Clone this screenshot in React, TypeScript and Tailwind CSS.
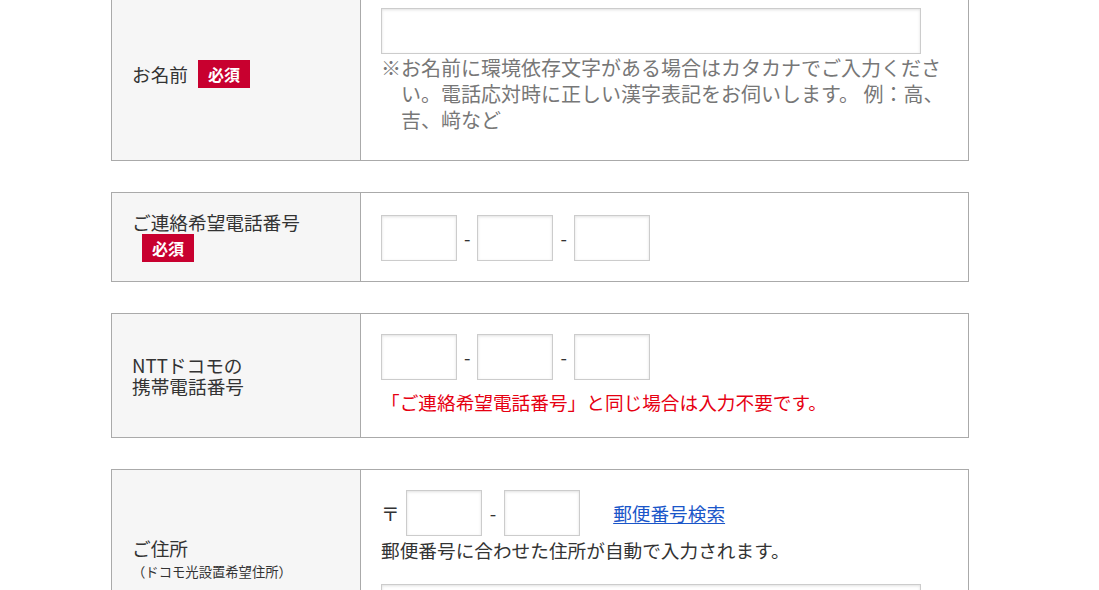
import React from 'react';

const font = { fontFamily: '"Noto Sans CJK JP", "Noto Sans", sans-serif' };

function Badge() {
    return (
        <span className="inline-flex items-center justify-center h-[28px] px-[10px] ml-[10px] bg-[#c8002f] text-white text-[16px] font-bold leading-none align-middle">
            必須
        </span>
    );
}

function TextInput({ className }: { className: string }) {
    return (
        <input
            type="text"
            className={`h-[46px] bg-white border border-[#cccccc] shadow-[inset_0_1px_3px_rgba(0,0,0,0.12)] outline-none ${className}`}
        />
    );
}

function Dash() {
    return <span className="text-[18.67px] leading-none text-[#333]">-</span>;
}

function TelInputs() {
    return (
        <div className="flex items-center gap-[7px]">
            <TextInput className="w-[76px]" />
            <Dash />
            <TextInput className="w-[76px]" />
            <Dash />
            <TextInput className="w-[76px]" />
        </div>
    );
}

function Row({ label, children }: { label: React.ReactNode; children: React.ReactNode }) {
    return (
        <div className="flex w-[858px] border border-[#aaaaaa]">
            <div className="w-[249px] shrink-0 bg-[#f6f6f6] border-r border-[#aaaaaa] px-5 flex items-center text-[18.67px] leading-[1.1] text-[#333]">
                <div>{label}</div>
            </div>
            <div className="flex-1 px-5 pt-5 pb-5">{children}</div>
        </div>
    );
}

export default function App() {
    return (
        <div className="bg-white min-h-screen h-[590px] overflow-hidden" style={font}>
            <div className="ml-[111px] flex flex-col gap-[31px] -mt-[13px]">
                {/* お名前 */}
                <Row
                    label={
                        <span className="inline-flex items-center">
                            お名前<Badge />
                        </span>
                    }
                >
                    <TextInput className="w-[540px] block" />
                    <p className="text-[20px] leading-[26px] text-[#777] pl-[20px] -indent-[20px] pt-[1px] pb-[7px]">
                        ※お名前に環境依存文字がある場合はカタカナでご入力ください。電話応対時に正しい漢字表記をお伺いします。 例：高、吉、﨑など
                    </p>
                </Row>

                {/* ご連絡希望電話番号 */}
                <Row
                    label={
                        <>
                            ご連絡希望電話番号
                            <br />
                            <span className="inline-block mt-[1px]">
                                <Badge />
                            </span>
                        </>
                    }
                >
                    <div className="pt-[2px]">
                        <TelInputs />
                    </div>
                </Row>

                {/* NTTドコモの携帯電話番号 */}
                <Row
                    label={
                        <>
                            NTTドコモの
                            <br />
                            携帯電話番号
                        </>
                    }
                >
                    <TelInputs />
                    <p className="mt-[7px] text-[18.67px] leading-[30px] text-[#e60012]">
                        「ご連絡希望電話番号」と同じ場合は入力不要です。
                    </p>
                </Row>

                {/* ご住所 */}
                <Row
                    label={
                        <>
                            ご住所
                            <br />
                            <span className="text-[13.33px] leading-[20px]">（ドコモ光設置希望住所）</span>
                        </>
                    }
                >
                    <div className="flex items-center text-[18.67px] text-[#333]">
                        <span className="mr-[6px]">〒</span>
                        <TextInput className="w-[76px]" />
                        <span className="mx-[8px]"><Dash /></span>
                        <TextInput className="w-[76px]" />
                        <a href="#" className="ml-[33px] text-[#1a56c9] underline underline-offset-2">
                            郵便番号検索
                        </a>
                    </div>
                    <p className="text-[18.67px] leading-[28px] text-[#333]">
                        郵便番号に合わせた住所が自動で入力されます。
                    </p>
                    <TextInput className="w-[540px] block mt-[20px]" />
                </Row>
            </div>
        </div>
    );
}
